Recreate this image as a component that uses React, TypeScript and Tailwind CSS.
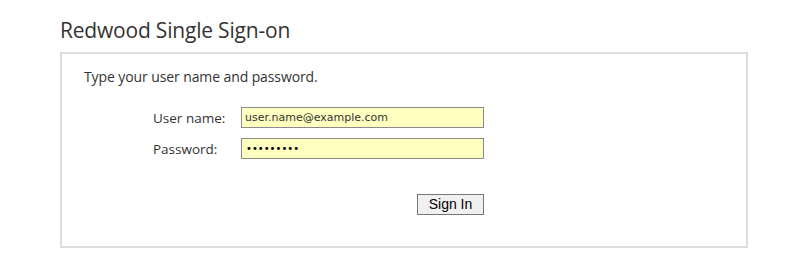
export default function App() {
  return (
    <div className="min-h-screen bg-white pt-[16px] pl-[60px] font-['Open_Sans',sans-serif] text-[#333]">
      {/* Title */}
      <h1 className="text-[21px] leading-[29px] tracking-[-0.2px]">Redwood Single Sign-on</h1>

      {/* Login box */}
      <div className="mt-[7px] w-[688px] h-[196px] border-2 border-[#dddddd] pl-[22px] pt-[13px]">
        <p className="text-[14px] leading-[20px] tracking-[-0.1px]">Type your user name and password.</p>

        <form className="ml-[69px] mt-[20px] w-[331px]" onSubmit={(e) => e.preventDefault()}>
          <div className="flex items-center h-[21px]">
            <label className="w-[88px] text-[13.5px] leading-[20px]">User name:</label>
            <input
              type="text"
              defaultValue="user.name@example.com"
              className="w-[243px] h-[21px] border border-[#8a8a8a] bg-[#ffffc0] px-[3px] font-['DejaVu_Sans',sans-serif] text-[11px] text-[#333] outline-none"
            />
          </div>
          <div className="flex items-center h-[21px] mt-[10px]">
            <label className="w-[88px] text-[13.5px] leading-[20px]">Password:</label>
            <input
              type="password"
              defaultValue="123456789"
              className="w-[243px] h-[21px] border border-[#8a8a8a] bg-[#ffffc0] px-[4px] font-['DejaVu_Sans',sans-serif] text-[10px] text-black outline-none"
            />
          </div>
          <div className="flex justify-end mt-[35px]">
            <button
              type="submit"
              className="w-[67px] h-[21px] border border-[#777] bg-[#f2eff0] font-['Liberation_Sans',Arial,sans-serif] text-[14px] leading-[19px] text-black"
            >
              Sign In
            </button>
          </div>
        </form>
      </div>
    </div>
  )
}
